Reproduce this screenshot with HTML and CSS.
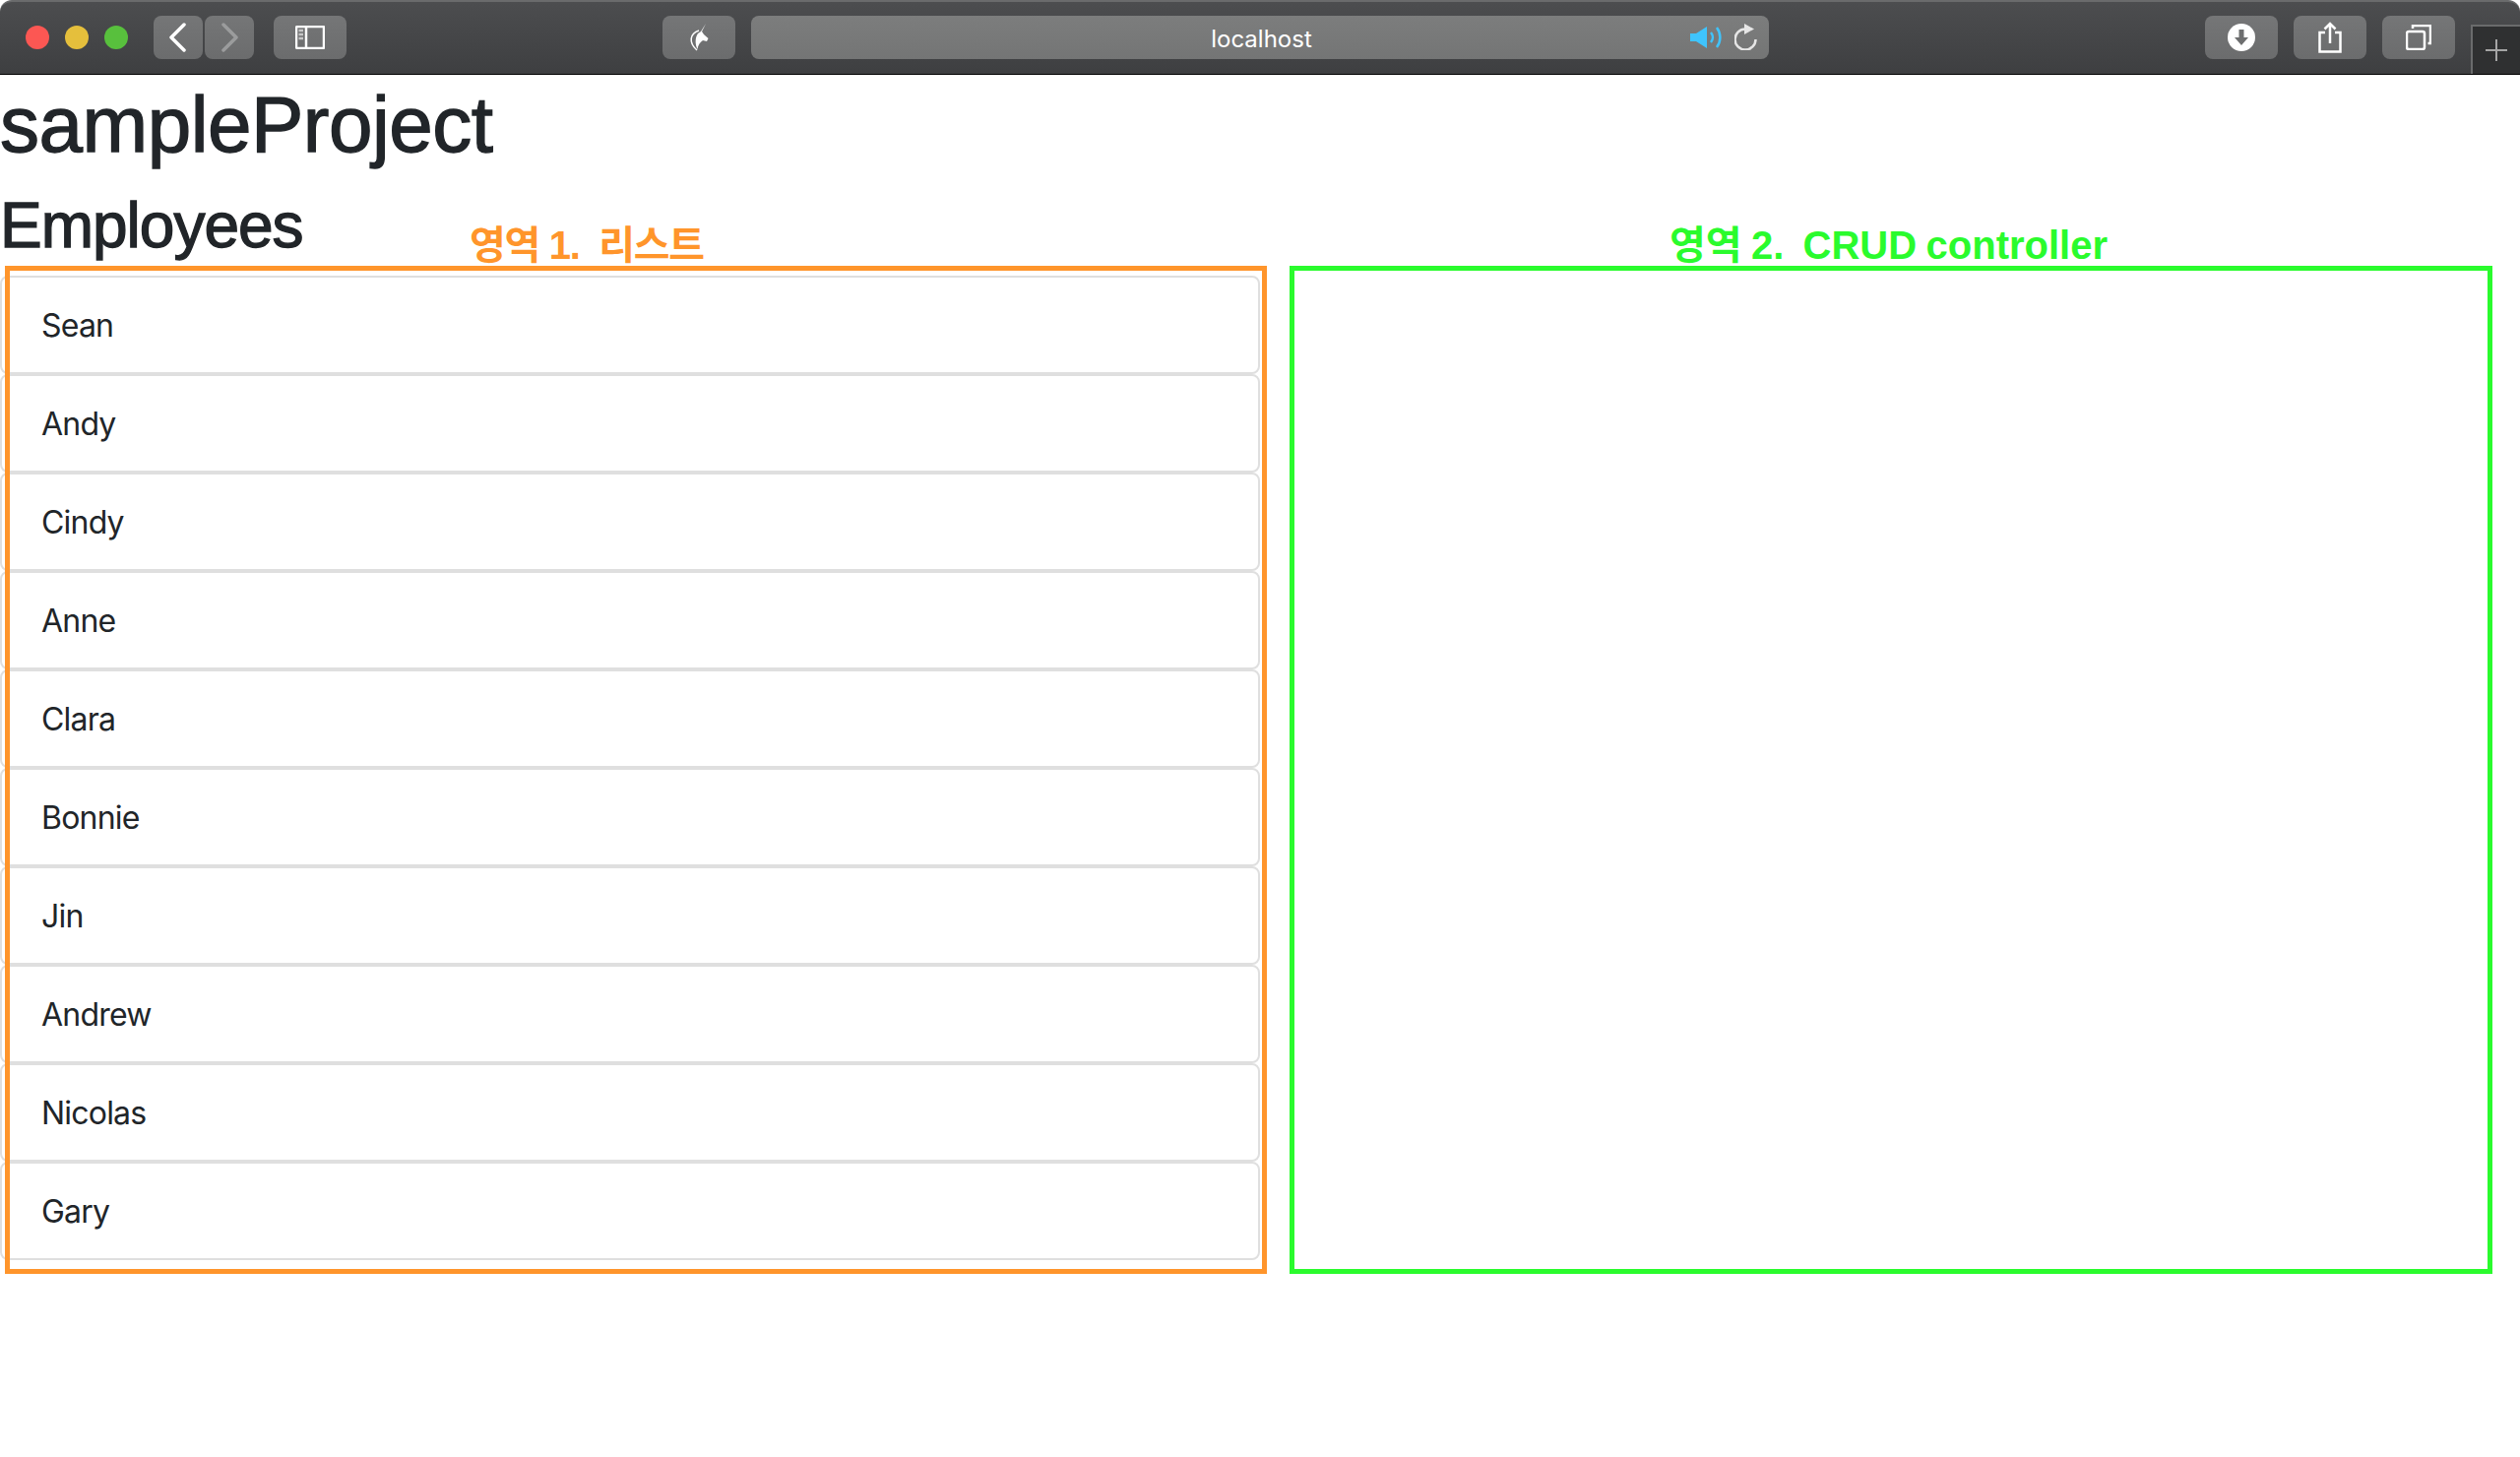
FILE: index.html
```html
<!DOCTYPE html>
<html lang="ko">
  <head>
    <meta charset="UTF-8" />
    <title>sampleProject</title>
    <link rel="stylesheet" href="styles.css">
  </head>
  <body>
    <header class="toolbar">
      <div class="lights">
        <span class="light red"></span>
        <span class="light yellow"></span>
        <span class="light green"></span>
      </div>
      <div class="nav-group">
        <div class="btn btn-nav">
          <svg width="24" height="30" viewBox="0 0 24 30"><path d="M18 2 5 15l13 13" class="stroke" /></svg>
        </div>
        <div class="btn btn-nav">
          <svg width="24" height="30" viewBox="0 0 24 30"><path d="M6 2l13 13L6 28" class="stroke dim" /></svg>
        </div>
      </div>
      <div class="btn btn-wide sidebar-btn">
        <svg width="30" height="24" viewBox="0 0 30 24">
          <rect x="1" y="1" width="28" height="22" rx="1" class="thin" />
          <path d="M11 1v22" class="thin" />
          <path d="M3.500 5H8M3.500 9H8M3.500 13H8" class="thin dim-line" />
        </svg>
      </div>
      <div class="btn btn-wide unicorn-btn">
        <svg width="20" height="30" viewBox="0 0 20 30">
          <path d="M17 1 13 9l2 3 4.500 4-1.500 3-4-1c-3 2-5 5-5.500 9C6 22 6 15 9 11l3-2z" fill="#fff" />
          <path d="M10 8C1 11-1 20 8 28" class="mane" />
        </svg>
      </div>
      <div class="url-bar">
        <span class="url-text">localhost</span>
        <div class="url-icons">
          <svg width="33" height="24" viewBox="0 0 33 24">
            <path d="M0 8h6l11-7v22L6 16H0z" fill="#3fc4fd" />
            <path d="M21 7c2.500 3 2.500 7 0 10M27 2c4.500 6 4.500 14 0 20" class="sound" />
          </svg>
          <svg width="23" height="27" viewBox="0 0 23 27">
            <path d="M11 5.500A10.500 10.500 0 1 0 21.500 16" class="reload" />
            <path d="M10 0v11l10-5.500z" fill="#e6e6e6" />
          </svg>
        </div>
      </div>
      <div class="actions">
        <div class="btn btn-wide">
          <svg width="28" height="28" viewBox="0 0 28 28">
            <circle cx="14" cy="14" r="14" fill="#fff" />
            <path d="M11.500 6h5v8h4.500L14 22l-7-8h4.500z" fill="#6d6e6f" />
          </svg>
        </div>
        <div class="btn btn-wide">
          <svg width="24" height="32" viewBox="0 0 24 32">
            <path d="M7 11H1.500v19.500h21V11H17" class="thin" />
            <path d="M12 22V2M6.500 7.500 12 2l5.500 5.500" class="thin" />
          </svg>
        </div>
        <div class="btn btn-wide">
          <svg width="26" height="26" viewBox="0 0 26 26">
            <rect x="1" y="7" width="18" height="18" rx="2" class="thin" />
            <path d="M7 4V1h18v18h-2.500" class="thin" />
          </svg>
        </div>
      </div>
      <div class="new-tab">
        <svg width="22" height="22" viewBox="0 0 22 22"><path d="M11 0v22M0 11h22" class="plus" /></svg>
      </div>
    </header>

    <main>
      <h1>sampleProject</h1>
      <h2>Employees</h2>
      <div class="panels">
        <section class="panel">
          <span class="note note-orange">영역 1.&nbsp; 리스트</span>
          <div class="frame frame-orange"></div>
          <ul class="employee-list">
            <li>Sean</li>
            <li>Andy</li>
            <li>Cindy</li>
            <li>Anne</li>
            <li>Clara</li>
            <li>Bonnie</li>
            <li>Jin</li>
            <li>Andrew</li>
            <li>Nicolas</li>
            <li>Gary</li>
          </ul>
        </section>
        <section class="panel">
          <span class="note note-green">영역 2.&nbsp; CRUD controller</span>
          <div class="frame frame-green"></div>
        </section>
      </div>
    </main>
  </body>
</html>
```

FILE: styles.css
```css
html {
  background: #fff;
}

body {
  margin: 0;
  font-family: "Inter", "Liberation Sans", sans-serif;
  color: #212529;
  min-height: 1480px;
  overflow: hidden;
}

/* browser chrome */
.toolbar {
  display: flex;
  align-items: flex-start;
  position: relative;
  height: 76px;
  padding-top: 14px;
  box-sizing: border-box;
  border-radius: 12px 12px 0 0;
  border-top: 2px solid #6a6b6c;
  border-bottom: 1px solid #000;
  background: linear-gradient(#4c4d4f, #3e3f41);
}

.lights {
  display: flex;
  gap: 16px;
  margin: 10px 0 0 26px;
}

.light {
  width: 24px;
  height: 24px;
  border-radius: 50%;
}

.light.red {
  background: #fc5753;
}

.light.yellow {
  background: #e5bf3c;
}

.light.green {
  background: #58c03d;
}

.btn {
  display: flex;
  align-items: center;
  justify-content: center;
  height: 44px;
  border-radius: 8px;
  background: linear-gradient(#757677, #6b6c6d);
}

.btn-nav {
  width: 50px;
}

.btn-wide {
  width: 74px;
}

.nav-group {
  display: flex;
  gap: 2px;
  margin-left: 26px;
}

.sidebar-btn {
  margin-left: 20px;
}

.unicorn-btn {
  margin-left: 321px;
}

.url-bar {
  display: flex;
  align-items: center;
  justify-content: center;
  position: relative;
  width: 1034px;
  height: 44px;
  margin-left: 16px;
  border-radius: 8px;
  background: linear-gradient(#7c7d7d, #747575);
}

.url-text {
  padding: 2px 0 0 3px;
  font-size: 24px;
  color: #fff;
}

.url-icons {
  position: absolute;
  right: 12px;
  top: 8px;
  display: flex;
  align-items: center;
  gap: 12px;
}

.actions {
  display: flex;
  gap: 16px;
  margin-left: 443px;
}

.new-tab {
  position: absolute;
  right: 0;
  bottom: 0;
  display: flex;
  align-items: center;
  justify-content: center;
  width: 50px;
  height: 50px;
  box-sizing: border-box;
  border-left: 2px solid #6a6b6c;
  border-top: 2px solid #6a6b6c;
  background: #2f3031;
}

.stroke {
  fill: none;
  stroke: #fff;
  stroke-width: 3.500;
  stroke-linecap: round;
  stroke-linejoin: round;
}

.stroke.dim {
  stroke: #9b9c9d;
}

.thin {
  fill: none;
  stroke: #fff;
  stroke-width: 2.500;
}

.mane {
  fill: none;
  stroke: #fff;
  stroke-width: 1.500;
}

.dim-line {
  stroke: #c8c8c8;
}

.sound {
  fill: none;
  stroke: #3fc4fd;
  stroke-width: 2.500;
}

.reload {
  fill: none;
  stroke: #e6e6e6;
  stroke-width: 2.500;
}

.plus {
  fill: none;
  stroke: #a5a5a5;
  stroke-width: 2;
}

/* page */
h1,
h2 {
  margin: 0;
  font-family: "Liberation Sans", sans-serif;
  font-weight: 400;
  line-height: 1.2;
  -webkit-text-stroke: 1.300px #212529;
}

h1 {
  font-size: 80px;
  letter-spacing: -0.5px;
  padding-top: 3px;
  margin-bottom: 16px;
}

h2 {
  font-size: 64px;
  letter-spacing: -1px;
  margin-bottom: 12px;
}

.panels {
  display: grid;
  grid-template-columns: 1280px 1280px;
}

.panel {
  position: relative;
  height: 1000px;
}

.employee-list {
  list-style: none;
  margin: 0;
  padding: 0;
}

.employee-list li {
  display: flex;
  align-items: center;
  height: 100px;
  box-sizing: border-box;
  padding: 2px 40px 0;
  font-size: 32px;
  letter-spacing: -0.8px;
  border: 2px solid #dfdfdf;
  border-radius: 8px;
}

/* hand drawn annotations on the screenshot */
.frame {
  position: absolute;
  top: -10px;
  height: 1024px;
  box-sizing: border-box;
  border: 5px solid;
  pointer-events: none;
}

.frame-orange {
  left: 5px;
  width: 1282px;
  border-color: #ff952b;
}

.frame-green {
  left: 30px;
  width: 1222px;
  border-color: #2afb2d;
}

.note {
  position: absolute;
  top: -63px;
  font-family: "Liberation Sans", "Noto Sans CJK KR", sans-serif;
  font-size: 40px;
  font-weight: 700;
  white-space: nowrap;
}

.note-orange {
  left: 477px;
  letter-spacing: -1.300px;
  color: #ff952b;
}

.note-green {
  left: 416px;
  word-spacing: -1.600px;
  color: #2afb2d;
}
```
